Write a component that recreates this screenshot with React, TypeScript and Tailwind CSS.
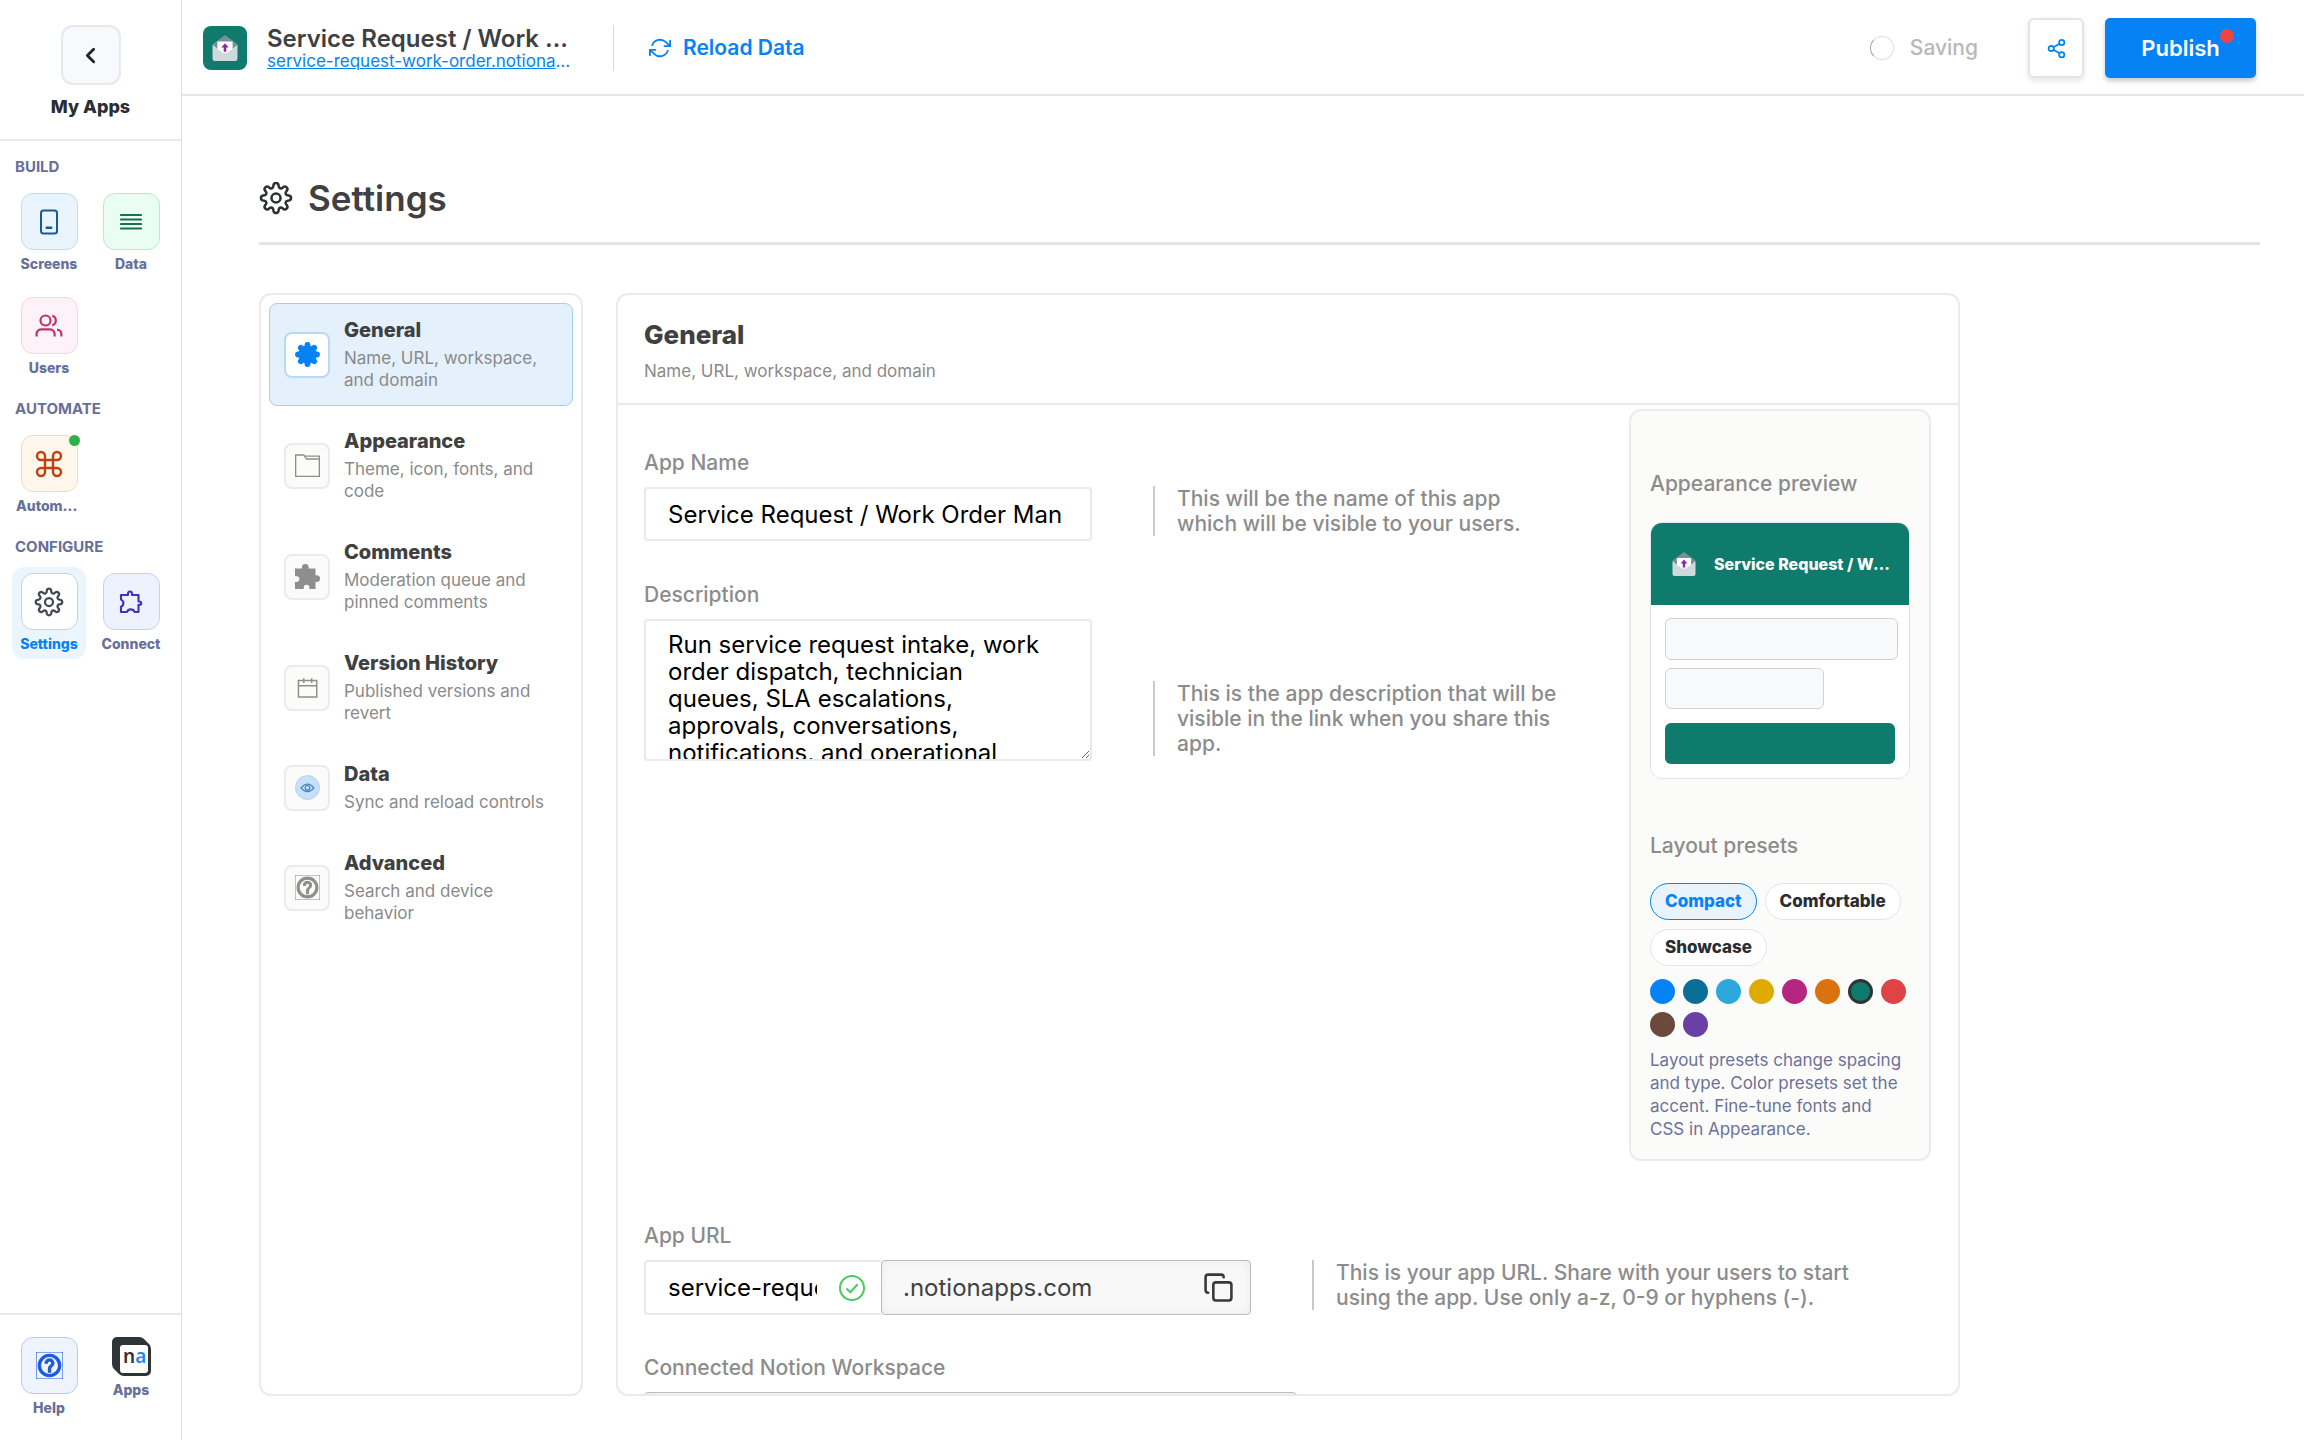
import React, { useState } from 'react';
import { ChevronLeft, Command, Copy, Share2 } from 'lucide-react';
import { FiRefreshCw } from 'react-icons/fi';
import { MdHelpOutline } from 'react-icons/md';

// Outline of an eight-lobed cog inside a 24x24 box
const cogPath = (() => {
  const pt = (r: number, deg: number) => {
    const a = (deg * Math.PI) / 180;
    return `${(12 + r * Math.cos(a)).toFixed(2)} ${(12 + r * Math.sin(a)).toFixed(2)}`;
  };
  let d = `M${pt(9.3, -11)}`;
  for (let i = 0; i < 8; i++) {
    const c = i * 45;
    d += `A1.8 1.8 0 0 1 ${pt(9.3, c + 11)}L${pt(8.4, c + 13)}A1.6 1.6 0 0 0 ${pt(8.4, c + 32)}L${pt(9.3, c + 34)}`;
  }
  return d + 'Z';
})();

const Cog = ({ className }: { className?: string }) => (
  <svg viewBox="0 0 24 24" fill="none" stroke="currentColor" strokeWidth="1.8" strokeLinejoin="round" className={className}>
    <path d={cogPath} />
    <circle cx="12" cy="12" r="3.2" />
  </svg>
);

const CogSolid = () => (
  <svg viewBox="0 0 24 24" fill="currentColor" className="size-[25px]">
    <circle cx="12" cy="12" r="9" />
    {[0, 45, 90, 135, 180, 225, 270, 315].map(a => (
      <circle key={a} cx="12" cy="2.9" r="2.8" transform={`rotate(${a} 12 12)`} />
    ))}
  </svg>
);

const Folder = () => (
  <svg viewBox="0 0 24 24" fill="none" stroke="currentColor" strokeWidth="1.3" className="size-[25px]">
    <path d="M.6 1.9h7.8l2.6 3.9h12.4v16.6H.6z" />
    <path d="M9 3h14.4v3" />
  </svg>
);

const PuzzleSolid = () => (
  <svg viewBox="0 0 24 24" fill="currentColor" className="size-[25px]">
    <path d="M0 4.3h6.7V3.2a3.2 3.2 0 0 1 6.4 0v1.1h6.6v6.6h1.1a3.2 3.2 0 0 1 0 6.4h-1.1V24h-5.9v-1.4a2.7 2.7 0 0 0-5.4 0V24H0v-6.8h1.5a2.7 2.7 0 0 0 0-5.4H0z" />
  </svg>
);

const PuzzleOutline = () => (
  <svg viewBox="0 0 24 24" fill="none" stroke="currentColor" strokeWidth="2.1" strokeLinejoin="round" className="size-6">
    <path d="M2 5h7V3.5a2 2 0 0 1 4 0V5h6.5v6.5h1a1.7 1.7 0 0 1 0 3.4h-1V22H15.5a4 4 0 0 0-7.5 0H2v-5.2a3.9 3.9 0 0 0 0-7.2z" />
  </svg>
);

const Calendar = () => (
  <svg viewBox="0 0 24 24" fill="none" stroke="currentColor" strokeWidth="1.4" className="size-[25px]">
    <path d="M3.3 5.3h17.6v15.8H3.3zM3.3 10.4h17.6M8.4 3v4.6M16 3v4.6" />
  </svg>
);

const Eye = () => (
  <svg viewBox="0 0 24 24" fill="none" className="size-[25px]">
    <circle cx="12" cy="12" r="11.5" fill="#c4e0fc" stroke="#b3cbe3" strokeWidth=".8" />
    <path d="M5.8 12.3q6.2-7.4 12.4 0-6.2 7.4-12.4 0z" stroke="#4781b8" strokeWidth="1.1" />
    <circle cx="12" cy="12.3" r="2.2" stroke="#4781b8" strokeWidth="1.1" />
  </svg>
);

const Phone = () => (
  <svg viewBox="0 0 20 26" fill="none" stroke="currentColor" strokeWidth="2" strokeLinecap="round" className="h-[26px] w-5">
    <rect x="2" y="1.5" width="16" height="23" rx="2.5" />
    <path d="M7.8 18.8h4.4" strokeWidth="2.6" />
  </svg>
);

const Rows = () => (
  <svg viewBox="0 0 22 18" stroke="currentColor" strokeWidth="2.2" strokeLinecap="round" className="h-[18px] w-[22px]">
    <path d="M1 2h20M1 6.5h20M1 11h20M1 15.5h20" />
  </svg>
);

const Users = () => (
  <svg viewBox="0 0 28 23" fill="none" stroke="currentColor" strokeWidth="2.2" className="h-[23px] w-7">
    <circle cx="10.5" cy="6.5" r="5" />
    <path d="M1.6 22.5V20a4.5 4.5 0 0 1 4.5-4.6h9a4.5 4.5 0 0 1 4.5 4.6v2.5M17.2 1.7a5 5 0 0 1 0 9.6M22 15.6a4.5 4.5 0 0 1 4.4 4.6v2.3" />
  </svg>
);

const Envelope = ({ className }: { className?: string }) => (
  <svg viewBox="0 0 24 24" className={className}>
    <path d="M.5 8.5 12 0l11.5 8.500-3 5h-17z" fill="#78909c" />
    <path d="M.5 9 8 15h8l7.5-6v13a2 2 0 0 1-2 2h-19a2 2 0 0 1-2-2z" fill="#cfd8dc" />
    <path d="M5 6h14v7l-5 3.5h-4L5 13z" fill="#fff" />
    <path d="m12 7.500-3.400 4h2.200v4h2.400v-4h2.200z" fill="#8e24aa" />
  </svg>
);

const AppsLogo = () => (
  <svg viewBox="0 0 39 39" className="size-[39px]">
    <path d="M5 0h22q3 0 5 2l5 5q2 2 2 5v22a5 5 0 0 1-5 5H12q-3 0-5-2l-5-5q-2-2-2-5V5a5 5 0 0 1 5-5z" fill="#2f3437" />
    <rect x="8" y="8" width="28" height="28" rx="3" fill="#fff" />
    <text x="11" y="26" fontFamily="Noto Sans, sans-serif" fontWeight="600" fontSize="19" fill="#333">n<tspan fill="#1a8cf0">a</tspan></text>
  </svg>
);

type Item = { label: string; icon: React.ReactNode; tile: string; active?: boolean; dot?: boolean };

const groups: { title: string; items: Item[] }[] = [
  {
    title: 'BUILD',
    items: [
      { label: 'Screens', icon: <Phone />, tile: 'bg-[#eaf4fd] border-[#bcdcf7] text-[#155a9c]' },
      { label: 'Data', icon: <Rows />, tile: 'bg-[#eafdf2] border-[#b5ecca] text-[#17704a]' },
      { label: 'Users', icon: <Users />, tile: 'bg-[#fdf2f8] border-[#f9d2e5] text-[#c2326c]' },
    ],
  },
  {
    title: 'AUTOMATE',
    items: [
      { label: 'Automations', icon: <Command size={32} strokeWidth={1.8} />, tile: 'bg-[#fff6ec] border-[#fad9b0] text-[#bf400f]', dot: true },
    ],
  },
  {
    title: 'CONFIGURE',
    items: [
      { label: 'Settings', icon: <Cog className="size-[30px]" />, tile: 'bg-white border-[#cfd0d6] text-[#414852]', active: true },
      { label: 'Connect', icon: <PuzzleOutline />, tile: 'bg-[#eef1fe] border-[#c8cdfa] text-[#4130c2]' },
    ],
  },
];

const sections = [
  { title: 'General', desc: 'Name, URL, workspace, and domain', icon: <CogSolid /> },
  { title: 'Appearance', desc: 'Theme, icon, fonts, and code', icon: <Folder /> },
  { title: 'Comments', desc: 'Moderation queue and pinned comments', icon: <PuzzleSolid /> },
  { title: 'Version History', desc: 'Published versions and revert', icon: <Calendar /> },
  { title: 'Data', desc: 'Sync and reload controls', icon: <Eye /> },
  { title: 'Advanced', desc: 'Search and device behavior', icon: <MdHelpOutline size={25} strokeWidth={1} /> },
];

const swatches = [
  { name: 'Blue', color: 'bg-[#0583f5]' },
  { name: 'Ocean', color: 'bg-[#0b6e99]' },
  { name: 'Sky', color: 'bg-[#2ea8dc]' },
  { name: 'Yellow', color: 'bg-[#dfab01]' },
  { name: 'Pink', color: 'bg-[#b4267f]' },
  { name: 'Orange', color: 'bg-[#d9730d]' },
  { name: 'Green', color: 'bg-[#0f7b6c]' },
  { name: 'Red', color: 'bg-[#e04343]' },
  { name: 'Brown', color: 'bg-[#6a4a3c]' },
  { name: 'Purple', color: 'bg-[#6940a5]' },
];

const NavItem = ({ item }: { item: Item }) => (
  <button className={`flex w-[74px] flex-col items-center rounded-xl px-1 pt-[6px] pb-[5px] ${item.active ? 'bg-[#ebf5fe]' : ''}`}>
    <span className={`relative flex size-[57px] items-center justify-center rounded-xl border ${item.tile}`}>
      {item.icon}
      {item.dot && <span className="absolute -top-px -right-[3px] size-[11px] rounded-full bg-[#2bb24c]" />}
    </span>
    <span className={`mt-1 block w-full truncate text-center text-sm leading-5 font-extrabold ${item.active ? 'text-[#0583f5]' : 'text-[#66709a]'}`}>
      {item.label}
    </span>
  </button>
);

const Hint = ({ children }: { children: React.ReactNode }) => (
  <p className="mb-[5px] border-l-2 border-[#c9c9c9] pl-[22px] text-[21px] leading-[25px] font-medium text-[#8c8c8c]">{children}</p>
);

const labelClass = 'block text-[21px] leading-[26px] font-medium text-[#8c8c8c]';
const lockedClass = 'border border-[#bcbcbc] bg-[#f8f8f8] shadow-[inset_0_0_10px_rgba(0,0,0,0.06)]';

const App: React.FC = () => {
  const [section, setSection] = useState('General');
  const [preset, setPreset] = useState('Compact');
  const [accent, setAccent] = useState('Green');
  const [name, setName] = useState('Service Request / Work Order Man');
  const [slug, setSlug] = useState('service-request-work-order');

  return (
    <div className="flex h-screen overflow-hidden bg-white font-['Inter',sans-serif] text-[#3f4042]">
      {/* Sidebar */}
      <aside className="flex w-[182px] shrink-0 flex-col border-r border-[#dfdfe1]">
        <div className="flex flex-col items-center border-b-2 border-[#e9e9eb] pt-[25px] pb-5">
          <button aria-label="Back to My Apps" className="flex size-[60px] items-center justify-center rounded-xl border-2 border-[#e5e9f0] bg-[#f7f9fb] text-[#23272b]">
            <ChevronLeft size={25} strokeWidth={2.8} />
          </button>
          <span className="mt-[10px] text-lg leading-6 font-extrabold text-[#2b2e31]">My Apps</span>
        </div>

        <nav className="flex-1 px-3">
          {groups.map(g => (
            <div key={g.title} className="mt-4">
              <h3 className="mb-[10px] ml-[3px] text-[15px] leading-5 font-bold text-[#66709a]">{g.title}</h3>
              <div className="flex flex-wrap gap-x-2 gap-y-3">
                {g.items.map(i => <NavItem key={i.label} item={i} />)}
              </div>
            </div>
          ))}
        </nav>

        <div className="flex items-start gap-2 border-t-2 border-[#e9e9eb] px-3 pt-4 pb-[17px]">
          <NavItem item={{ label: 'Help', icon: <MdHelpOutline size={27} strokeWidth={1} />, tile: 'bg-[#eef3fe] border-[#b6cbfb] text-[#1b5ae0]' }} />
          <button className="flex w-[74px] flex-col items-center pt-[6px]">
            <AppsLogo />
            <span className="mt-1 text-sm leading-5 font-extrabold text-[#66709a]">Apps</span>
          </button>
        </div>
      </aside>

      <div className="flex min-w-0 flex-1 flex-col">
        {/* Top bar */}
        <header className="flex h-24 shrink-0 items-center border-b-2 border-[#e6e6e6] pt-[2px] pr-12 pl-[21px]">
          <span className="flex size-11 items-center justify-center rounded-lg bg-[#0f7b6c]">
            <Envelope className="size-[26px]" />
          </span>
          <div className="ml-5 w-[310px]">
            <h1 className="truncate text-2xl leading-[26px] font-semibold">Service Request / Work Order Management</h1>
            <a href="#" className="block truncate text-[17px] leading-[18px] text-[#0583f5] underline">service-request-work-order.notionapps.com</a>
          </div>
          <span className="ml-9 h-[46px] w-px bg-[#d9d9d9]" />
          <button className="ml-[35px] flex items-center gap-3 text-[21px] font-semibold text-[#0583f5]">
            <FiRefreshCw size={22} />
            Reload Data
          </button>

          <div className="ml-auto flex items-center">
            <span className="size-6 rounded-full border border-[#dedede] border-l-[#a5a5a5]" />
            <span className="ml-4 text-[21px] font-medium text-[#b8b8b8]">Saving</span>
            <button aria-label="Share" className="ml-[50px] flex h-[60px] w-14 items-center justify-center rounded-md border-2 border-[#e4e4e6] bg-white text-[#0583f5] shadow-[0_3px_6px_rgba(0,0,0,0.1)]">
              <Share2 size={21} />
            </button>
            <button className="relative ml-[21px] h-[60px] w-[151px] rounded-[5px] bg-[#0583f5] text-[22px] font-semibold text-white shadow-[0_3px_5px_rgba(0,0,0,0.22)]">
              Publish
              <span className="absolute top-[11px] right-[22px] size-[14px] rounded-full bg-[#ef4444]" />
            </button>
          </div>
        </header>

        <main className="flex min-h-0 flex-1 flex-col pt-20 pr-11 pb-11 pl-[77px]">
          <div className="flex items-center gap-[15px] border-b-[3px] border-[#e4e4e4] pb-[22px]">
            <Cog className="size-[34px] text-[#2f3235]" />
            <h2 className="text-[35px] leading-[44px] font-semibold">Settings</h2>
          </div>

          <div className="mt-12 flex min-h-0 flex-1 gap-[33px]">
            {/* Section list */}
            <nav className="flex w-[324px] shrink-0 flex-col gap-2 rounded-xl border-2 border-[#ebebed] p-2">
              {sections.map(s => {
                const on = s.title === section;
                return (
                  <button
                    key={s.title}
                    onClick={() => setSection(s.title)}
                    className={`flex items-center gap-[14px] rounded-lg border p-[14px] text-left ${on ? 'border-[#a3cdf5] bg-[#e4f0fc]' : 'border-transparent'}`}
                  >
                    <span className={`flex size-[46px] shrink-0 items-center justify-center rounded-lg border-2 ${on ? 'border-[#b8d8f7] bg-white text-[#0583f5]' : 'border-[#ebebeb] bg-[#fbfbfa] text-[#8e8e8e]'}`}>
                      {s.icon}
                    </span>
                    <span>
                      <span className="block text-xl leading-[25px] font-extrabold">{s.title}</span>
                      <span className="mt-1 block text-[17px] leading-[22px] text-[#8a8a8a]">{s.desc}</span>
                    </span>
                  </button>
                );
              })}
            </nav>

            {/* General panel */}
            <section className="max-w-[1344px] min-w-0 flex-1 overflow-hidden rounded-xl border-2 border-[#ebebed]">
              <div className="border-b-2 border-[#ebebed] px-[26px] pt-6 pb-[21px]">
                <h2 className="text-[26px] leading-8 font-extrabold">General</h2>
                <p className="mt-[9px] text-[17px] leading-[22px] text-[#8a8a8a]">Name, URL, workspace, and domain</p>
              </div>

              <div className="pt-1 pr-[27px] pl-[26px]">
                <div className="flex items-start justify-between">
                  <div className="flex flex-col gap-[41px] pt-[41px]">
                    <div className="flex items-end gap-[61px]">
                      <div className="w-[448px]">
                        <label htmlFor="app-name" className={labelClass}>App Name</label>
                        <input id="app-name" value={name} onChange={e => setName(e.target.value)} className="mt-[11px] h-[54px] w-full rounded-sm border-2 border-[#e9e9e9] px-[22px] text-2xl text-black" />
                      </div>
                      <div className="w-[400px]"><Hint>This will be the name of this app which will be visible to your users.</Hint></div>
                    </div>
                    <div className="flex items-end gap-[61px]">
                      <div className="w-[448px]">
                        <label htmlFor="app-desc" className={labelClass}>Description</label>
                        <textarea
                          id="app-desc"
                          className="mt-[11px] block h-[142px] w-full rounded-sm border-2 border-[#e9e9e9] py-[10px] pr-10 pl-[22px] text-2xl leading-[27px] text-black [scrollbar-width:none]"
                          defaultValue="Run service request intake, work order dispatch, technician queues, SLA escalations, approvals, conversations, notifications, and operational"
                        />
                      </div>
                      <div className="w-[430px]"><Hint>This is the app description that will be visible in the link when you share this app.</Hint></div>
                    </div>
                  </div>

                  <div className="w-[302px] shrink-0 rounded-xl border-2 border-[#ebebed] bg-[#fbfbf9] px-[19px] pt-[60px] pb-[18px]">
                    <h3 className={labelClass}>Appearance preview</h3>
                    <div className="mt-[25px] overflow-hidden rounded-xl border border-[#e4e4e4] bg-white">
                      <div className="flex h-[82px] items-center gap-[18px] bg-[#0f7b6c] pr-[18px] pl-[21px]">
                        <Envelope className="size-6 shrink-0" />
                        <span className="truncate text-base font-extrabold text-white">Service Request / Work Order Management</span>
                      </div>
                      <div className="px-[14px] pt-[13px] pb-[14px]">
                        <div className="mr-[-3px] h-[42px] rounded-md border border-[#cfd3d7] bg-[#f7f9fb]" />
                        <div className="mt-2 h-[41px] w-[159px] rounded-md border border-[#cfd3d7] bg-[#f7f9fb]" />
                        <div className="mt-[14px] h-[41px] rounded-md bg-[#0f7b6c]" />
                      </div>
                    </div>

                    <h3 className={`mt-[54px] ${labelClass}`}>Layout presets</h3>
                    <div className="mt-6 flex flex-wrap gap-x-2 gap-y-[9px]">
                      {['Compact', 'Comfortable', 'Showcase'].map(p => (
                        <button
                          key={p}
                          onClick={() => setPreset(p)}
                          className={`h-[37px] rounded-full border px-[14px] text-[17px] font-extrabold ${p === preset ? 'border-[#0583f5] bg-[#e8f3fe] text-[#0583f5]' : 'border-[#e4e4e4] bg-white text-[#2b2e31]'}`}
                        >
                          {p}
                        </button>
                      ))}
                    </div>
                    <div className="mt-[13px] flex flex-wrap gap-2">
                      {swatches.map(s => (
                        <button key={s.name} aria-label={s.name} onClick={() => setAccent(s.name)} className={`size-[25px] rounded-full ${s.color} ${s.name === accent ? 'border-[3px] border-[#2f3437]' : ''}`} />
                      ))}
                    </div>
                    <p className="mt-3 pr-1 text-[17px] leading-[23px] text-[#6b7299]">
                      Layout presets change spacing and type. Color presets set the accent. Fine-tune fonts and CSS in Appearance.
                    </p>
                  </div>
                </div>

                <div className="mt-[62px] flex items-end gap-[61px]">
                  <div className="w-[607px]">
                    <label htmlFor="app-url" className={labelClass}>App URL</label>
                    <div className="mt-[11px] flex">
                      <div className="flex h-[55px] w-[237px] shrink-0 items-center rounded-l-sm border-2 border-r-0 border-[#e9e9e9] pr-4 pl-[22px]">
                        <input id="app-url" value={slug} onChange={e => setSlug(e.target.value)} className="w-[149px] text-2xl text-black" />
                        <svg viewBox="0 0 26 26" fill="none" stroke="#4acb5f" strokeWidth="2" className="ml-auto size-[26px] shrink-0">
                          <circle cx="13" cy="13" r="12" />
                          <path d="m7.5 13.5 3.8 3.7 7.4-8" />
                        </svg>
                      </div>
                      <div className={`flex h-[55px] min-w-0 flex-1 items-center rounded-sm pr-4 pl-[21px] ${lockedClass}`}>
                        <input aria-label="App domain" readOnly value=".notionapps.com" className="min-w-0 flex-1 bg-transparent text-2xl text-[#414141]" />
                        <button aria-label="Copy URL" className="text-[#3a3a3a]"><Copy size={31} strokeWidth={2} /></button>
                      </div>
                    </div>
                  </div>
                  <div className="w-[570px]"><Hint>This is your app URL. Share with your users to start using the app. Use only a-z, 0-9 or hyphens (-).</Hint></div>
                </div>

                <div className="mt-10 w-[653px]">
                  <label htmlFor="workspace" className={labelClass}>Connected Notion Workspace</label>
                  <input id="workspace" readOnly className={`mt-[11px] h-[54px] w-full rounded-sm ${lockedClass}`} />
                </div>
              </div>
            </section>
          </div>
        </main>
      </div>
    </div>
  );
};

export default App;
